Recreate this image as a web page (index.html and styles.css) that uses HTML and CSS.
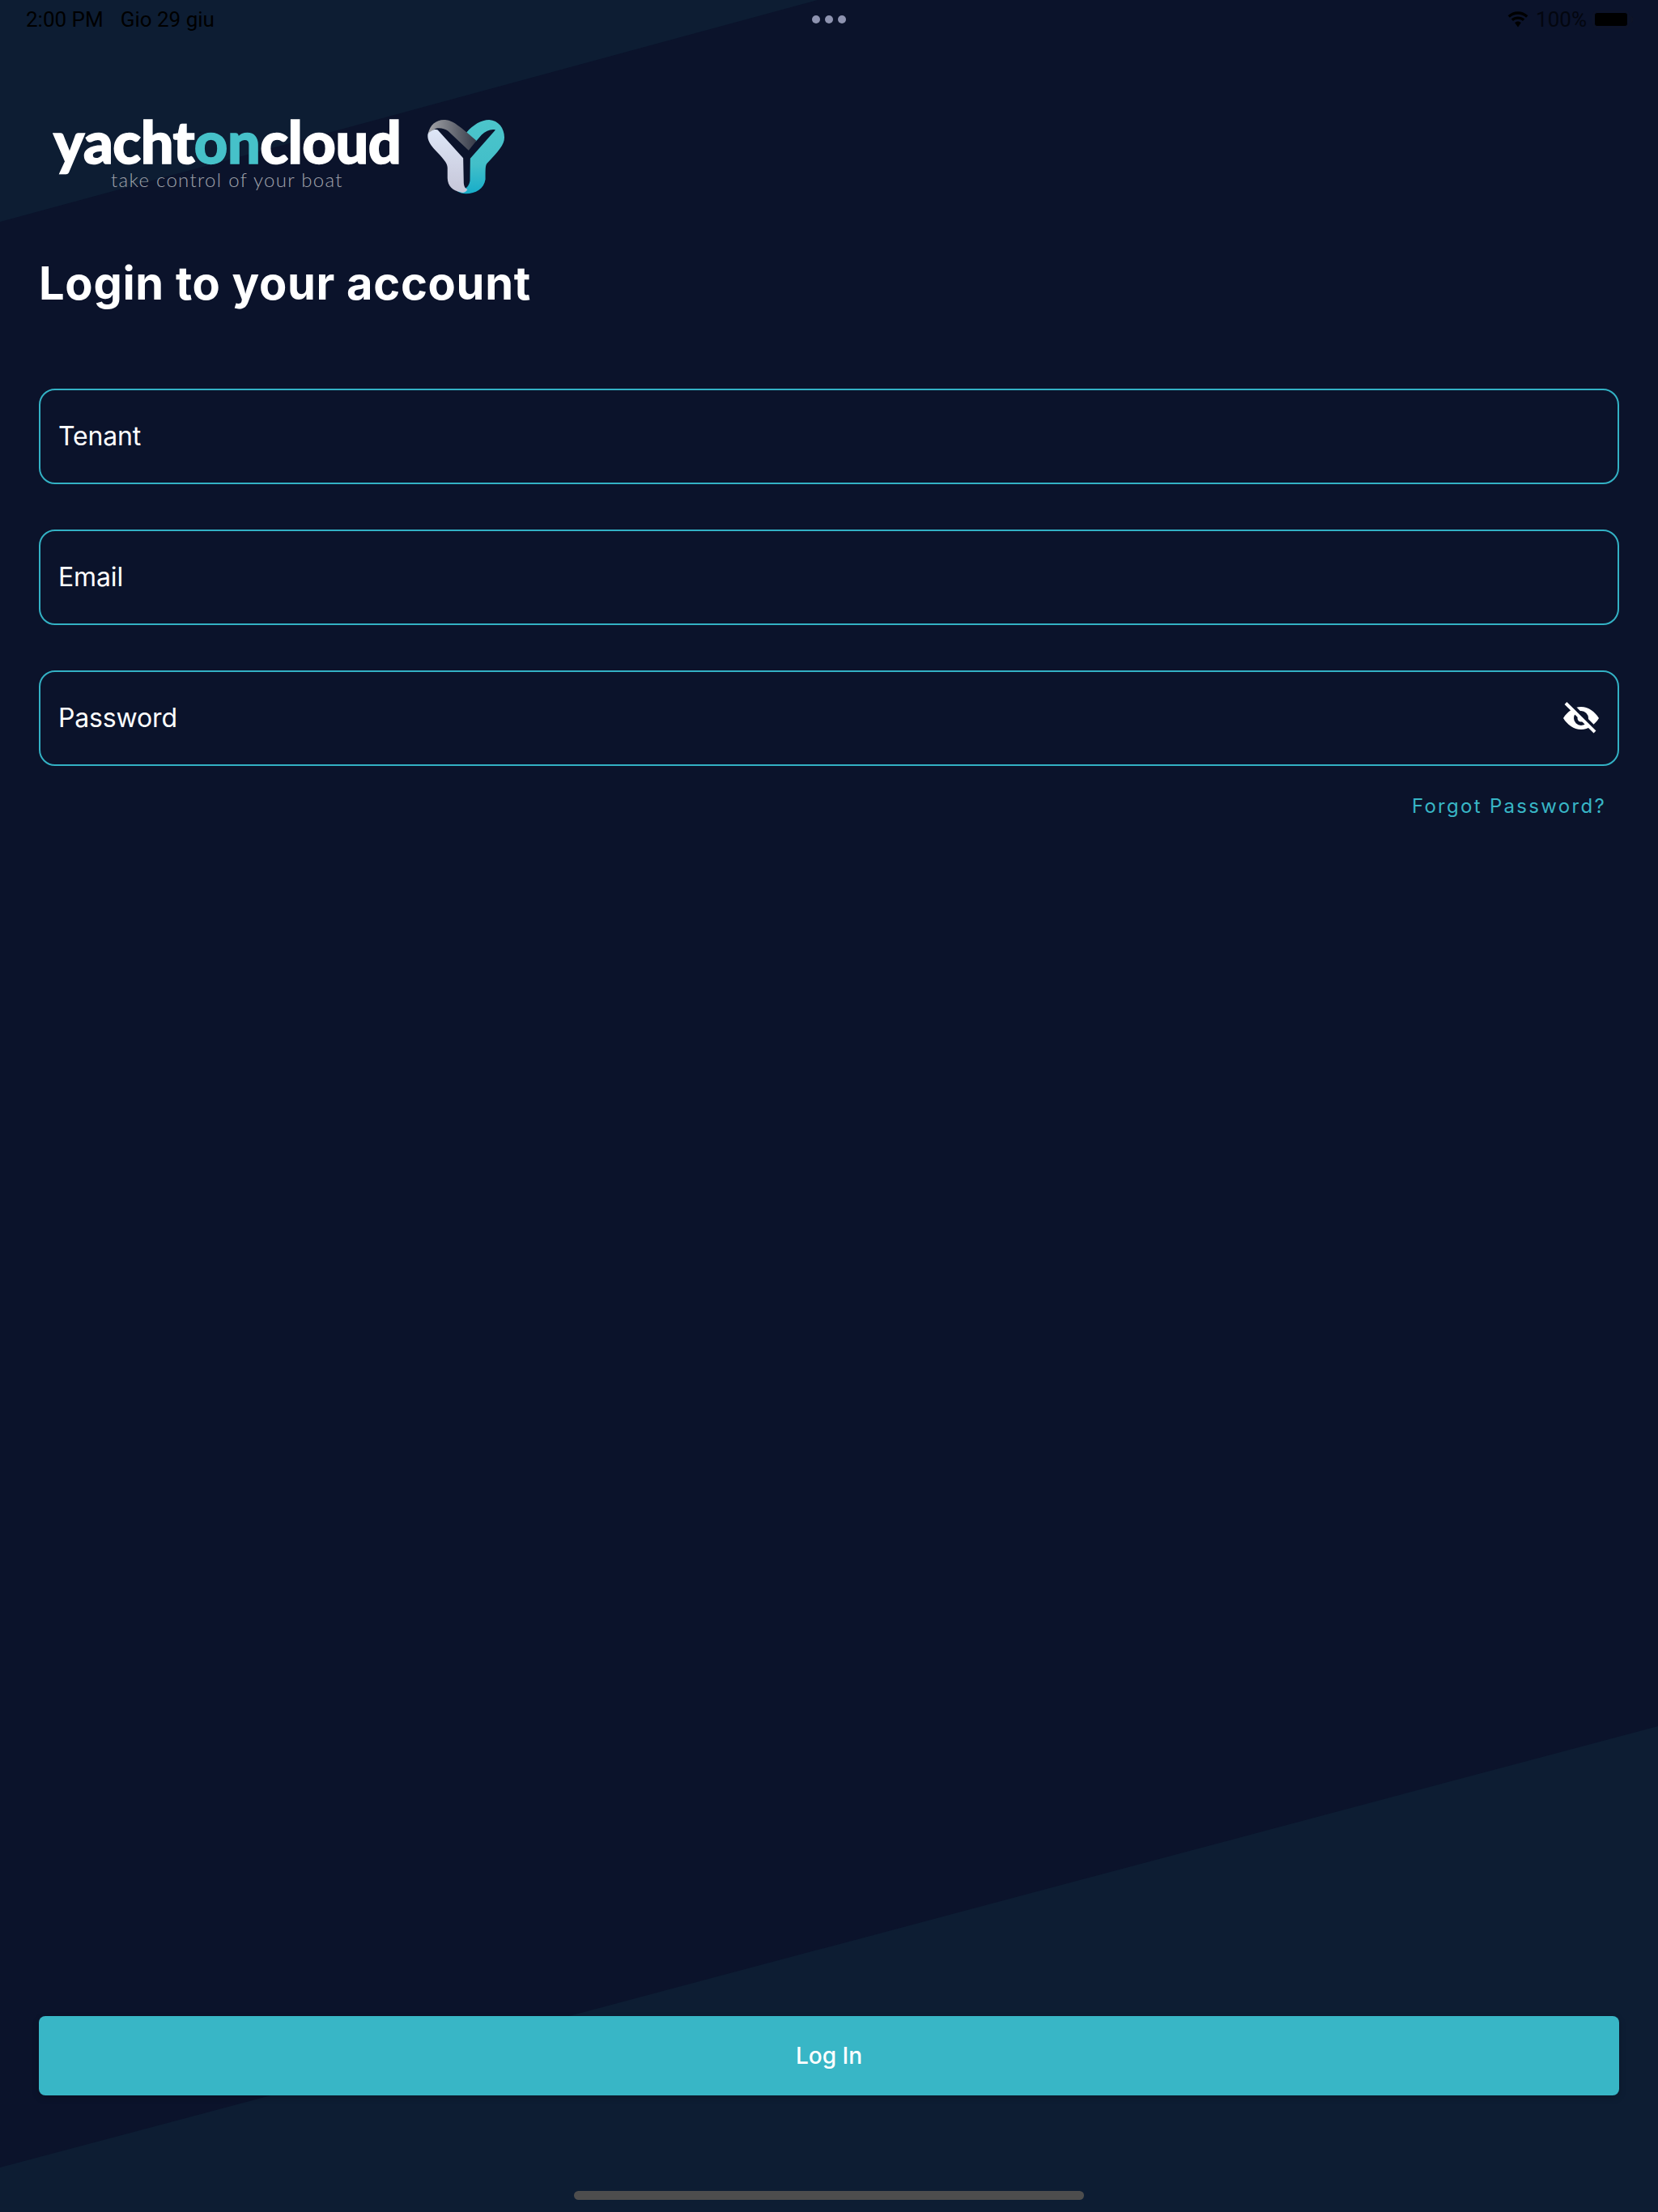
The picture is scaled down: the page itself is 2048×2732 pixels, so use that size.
FILE: index.html
```html
<!DOCTYPE html>
<html lang="en">
<head>
    <meta charset="UTF-8">
    <meta name="viewport" content="width=device-width, initial-scale=1.0">
    <title>Login</title>
    <link rel="stylesheet" href="styles.css">
</head>
<body>
    <div class="screen">
        <div class="wedge wedge-top"></div>
        <div class="wedge wedge-bottom"></div>

        <div class="status-bar">
            <div class="status-left"><span>2:00 PM</span><span>Gio 29 giu</span></div>
            <div class="status-dots"><i></i><i></i><i></i></div>
            <div class="status-right">
                <svg class="wifi" width="28" height="20" viewBox="0 0 28 20">
                    <path d="M14 3.800c3.900 0 7.400 1.500 10.100 3.900l2.300-2.400C23.100 2.200 18.800.3 14 .3S4.900 2.200 1.600 5.300l2.300 2.400C6.600 5.300 10.100 3.800 14 3.800z"/>
                    <path d="M14 9.700c2.300 0 4.400.9 6 2.300l2.300-2.400C20.100 7.600 17.200 6.400 14 6.400S7.900 7.600 5.700 9.600L8 12c1.600-1.400 3.700-2.300 6-2.300z"/>
                    <path d="M14 12.600c-1.500 0-2.900.6-3.900 1.500l3.900 5.400 3.900-5.400C16.900 13.200 15.500 12.600 14 12.600z"/>
                </svg>
                <span>100%</span>
                <div class="battery"><div class="battery-fill"></div></div>
                <div class="battery-cap"></div>
            </div>
        </div>

        <div class="logo">
            <div class="logo-words">
                <div class="logo-name">yacht<span>on</span>cloud</div>
                <div class="logo-tag">take control of your boat</div>
            </div>
            <svg class="logo-mark" width="96" height="92" viewBox="85 85 285 275">
                <defs>
                    <linearGradient id="markTeal" x1="0" y1="0" x2="0" y2="1">
                        <stop offset="0" stop-color="#4cc5cb"/>
                        <stop offset="0.6" stop-color="#43bfc9"/>
                        <stop offset="1" stop-color="#17adc9"/>
                    </linearGradient>
                    <linearGradient id="markLight" x1="0" y1="0" x2="0" y2="1">
                        <stop offset="0" stop-color="#dde6f7"/>
                        <stop offset="1" stop-color="#c6c6d8"/>
                    </linearGradient>
                    <linearGradient id="markGrey" x1="0" y1="0" x2="1" y2="0">
                        <stop offset="0" stop-color="#a3a4a8"/>
                        <stop offset="1" stop-color="#363b49"/>
                    </linearGradient>
                </defs>
                <path fill="url(#markTeal)" d="M228 132C252 104 282 85 312 85C346 87 368 116 368 150C368 178 346 200 304 246C298 254 298 262 298 305C293 340 262 358 226 358C214 358 203 355 194 349C218 346 238 334 241 310L242 228L335 122C318 118 300 126 284 140L262 166Z"/>
                <path fill="url(#markLight)" d="M85 145C85 128 96 118 122 122L216 226L218 318C219 332 224 338 232 342C226 352 214 358 206 352C178 346 159 330 158 300L158 262C158 244 140 226 108 192C93 174 85 160 85 145Z"/>
                <path fill="url(#markGrey)" d="M87 135C92 105 116 85 145 85C172 85 192 98 265 162L236 198L160 126C146 116 122 112 110 120C100 125 92 130 87 135Z"/>
            </svg>
        </div>

        <h1 class="title">Login to your account</h1>

        <form class="login-form">
            <div class="field"><span>Tenant</span></div>
            <div class="field"><span>Email</span></div>
            <div class="field">
                <span>Password</span>
                <svg class="eye" width="46" height="40" viewBox="0 0 46 40">
                    <path fill="#fff" fill-rule="evenodd" d="M23 6C32 6 40 12 45 20C40 28 32 34 23 34C14 34 6 28 1 20C6 12 14 6 23 6ZM23 11A9 9 0 1 0 23 29A9 9 0 1 0 23 11Z"/>
                    <circle cx="23" cy="20" r="4.500" fill="#fff"/>
                    <path stroke="#0b132b" stroke-width="4" d="M8 0L44 36"/>
                    <path stroke="#fff" stroke-width="4" d="M4 1.500L40 37"/>
                </svg>
            </div>
        </form>

        <a class="forgot">Forgot Password?</a>

        <div class="spacer"></div>

        <button class="login-btn" type="button">Log In</button>
        <div class="home-row"><div class="home-bar"></div></div>
    </div>
</body>
</html>
```

FILE: styles.css
```css
* {
    box-sizing: border-box;
}
html, body {
    margin: 0;
    padding: 0;
}
body {
    font-family: Inter, "Liberation Sans", sans-serif;
    background-color: #0b132b;
    color: #fff;
}
.screen {
    position: relative;
    width: 2048px;
    height: 2732px;
    overflow: hidden;
    display: flex;
    flex-direction: column;
    background-color: #0b132b;
}
.wedge {
    position: absolute;
    left: 0;
    width: 2048px;
    background-color: #0d1d33;
}
.wedge-top {
    top: 0;
    height: 274px;
    clip-path: polygon(0 0, 1010px 0, 0 274px);
}
.wedge-bottom {
    bottom: 0;
    height: 600px;
    clip-path: polygon(2048px 0, 2048px 600px, 0 600px, 0 545px);
}
.status-bar {
    position: relative;
    height: 48px;
    display: flex;
    align-items: center;
    justify-content: space-between;
    padding: 0 31px 0 32px;
    color: #000;
    font-family: Roboto, sans-serif;
    font-size: 26px;
}
.status-left {
    display: flex;
    gap: 21px;
}
.status-dots {
    position: absolute;
    left: 1003px;
    top: 19px;
    display: flex;
    gap: 6px;
}
.status-dots i {
    width: 10px;
    height: 10px;
    border-radius: 50%;
    background-color: #8e93b0;
}
.status-right {
    display: flex;
    align-items: center;
}
.status-right span {
    margin-left: 8px;
    color: #03060f;
}
.wifi {
    fill: #000;
}
.battery {
    width: 46px;
    height: 22px;
    margin-left: 7px;
    border: 2px solid #0e1428;
    border-radius: 6px;
    padding: 1px;
}
.battery-fill {
    height: 100%;
    background-color: #000;
    border-radius: 3px;
}
.battery-cap {
    width: 3px;
    height: 8px;
    margin-left: 1px;
    background-color: #0e1428;
    border-radius: 0 2px 2px 0;
}
.logo {
    position: relative;
    display: flex;
    align-items: flex-start;
    margin: 100px 0 0 66px;
    height: 92px;
}
.logo-words {
    width: 427px;
    margin-top: -4px;
}
.logo-name {
    font-family: Lato, sans-serif;
    font-weight: 900;
    font-size: 72px;
    line-height: 60px;
    letter-spacing: -0.500px;
    white-space: nowrap;
    -webkit-text-stroke: 1.500px #fff;
}
.logo-name span {
    color: #46c1c9;
    -webkit-text-stroke: 1.500px #46c1c9;
}
.logo-tag {
    margin: 5px 0 0 71px;
    font-family: Lato, sans-serif;
    font-weight: 300;
    font-size: 24px;
    line-height: 26px;
    letter-spacing: 1.300px;
    color: #a0a3ab;
    white-space: nowrap;
}
.logo-mark {
    margin-left: 35px;
}
.title {
    position: relative;
    margin: 76px 0 0 48px;
    font-size: 56px;
    line-height: 68px;
    font-weight: 700;
    letter-spacing: 0.700px;
}
.login-form {
    position: relative;
    display: flex;
    flex-direction: column;
    gap: 56px;
    margin: 96px 48px 0;
}
.field {
    height: 118px;
    display: flex;
    align-items: center;
    justify-content: space-between;
    padding: 0 22px;
    border: 2px solid #33b1c4;
    border-radius: 20px;
    font-size: 32px;
    letter-spacing: -0.150px;
}
.field span {
    margin-bottom: 2px;
}
.eye {
    flex: none;
}
.forgot {
    position: relative;
    align-self: flex-end;
    margin: 35px 64px 0 0;
    font-size: 24px;
    line-height: 30px;
    letter-spacing: 2.300px;
    color: #38b6c6;
}
.spacer {
    flex: 1;
}
.login-btn {
    position: relative;
    height: 98px;
    margin: 0 48px;
    border: none;
    border-radius: 8px;
    background-color: #38b6c6;
    color: #fff;
    font-family: Inter, sans-serif;
    font-size: 28px;
    font-weight: 500;
    box-shadow: 0 3px 8px rgba(0, 0, 0, 0.2);
}
.home-row {
    position: relative;
    height: 144px;
    padding-top: 118px;
    display: flex;
    justify-content: center;
}
.home-bar {
    width: 630px;
    height: 11px;
    border-radius: 6px;
    background-color: #4d4d4d;
}
```
